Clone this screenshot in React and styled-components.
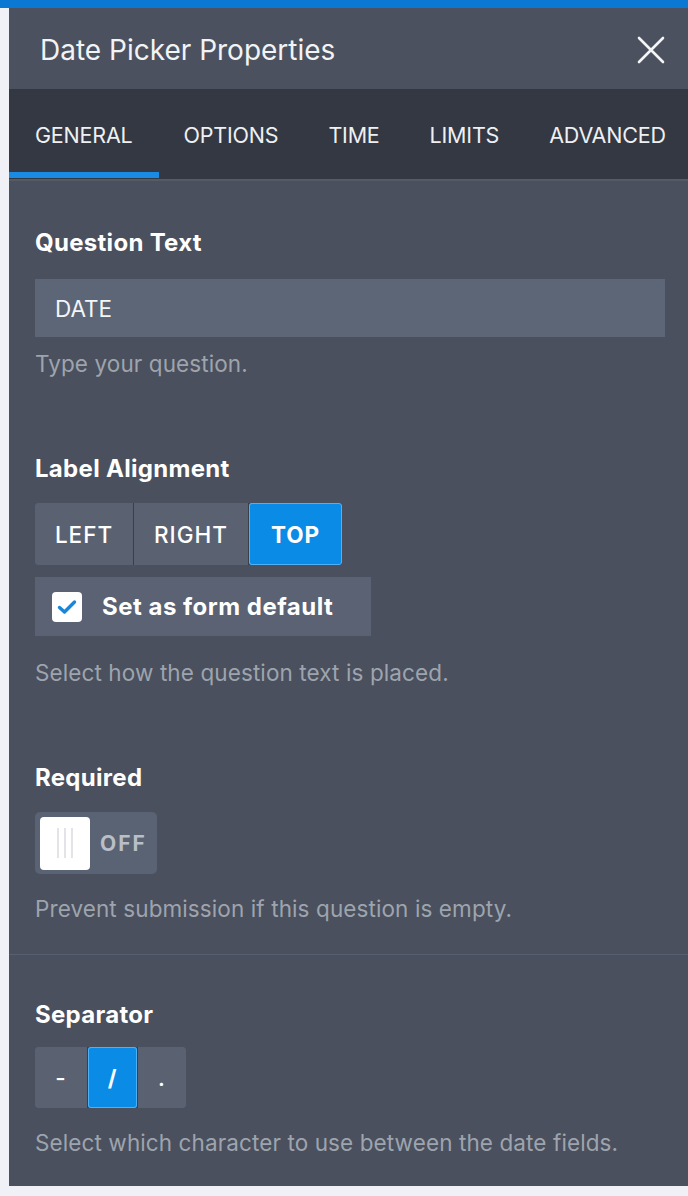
import React from 'react'
import styled, { createGlobalStyle } from 'styled-components'

const GlobalStyle = createGlobalStyle`
  html, body {
    margin: 0;
    padding: 0;
    background: #f2f3f7;
    font-family: Inter, "Liberation Sans", Arial, sans-serif;
  }
`

const Page = styled.div`
  border-top: 8px solid #0b78d3;
  display: flex;
  padding-left: 9px;
  padding-bottom: 10px;
  background: #eff1f6;
`

const Panel = styled.div`
  flex: 1;
  min-width: 0;
  background: #4a505d;
  color: #fff;
`

const Header = styled.div`
  height: 81px;
  display: flex;
  align-items: center;
  justify-content: space-between;
  padding: 2px 22px 0 31px;
  box-sizing: border-box;
  background: #4b515e;
`

const Title = styled.h1`
  margin: 0;
  font-size: 28px;
  font-weight: 400;
  color: #f2f3f5;
`

const CloseButton = styled.button`
  border: 0;
  background: transparent;
  padding: 0;
  width: 30px;
  height: 30px;
  display: flex;
  align-items: center;
  justify-content: center;
`

const TabBar = styled.div`
  display: flex;
  height: 90px;
  background: #343842;
  border-bottom: 2px solid #545a66;
  overflow: hidden;
`

const Tab = styled.div`
  position: relative;
  display: flex;
  align-items: center;
  padding: 2px 25px 0;
  font-size: 21.5px;
  letter-spacing: -0.2px;
  color: #eef0f3;
  white-space: nowrap;
  &:first-child {
    padding-left: 26px;
    padding-right: 26px;
  }
  ${p => p.$active && `
    &::after {
      content: '';
      position: absolute;
      left: 0;
      right: 0;
      bottom: 1px;
      height: 6px;
      background: #1a8be3;
    }
  `}
`

const Section = styled.section`
  padding: ${p => p.$top || 46}px 23px ${p => (p.$last ? 30 : 32)}px 26px;
  border-top: ${p => (p.$divider ? '1px solid #576070' : '0')};
`

const Label = styled.div`
  font-size: 24px;
  line-height: 28px;
  font-weight: 700;
  letter-spacing: 0.3px;
  color: #fff;
  margin-bottom: ${p => p.$gap || 20}px;
`

const TextInput = styled.div`
  height: 58px;
  display: flex;
  align-items: center;
  padding: 0 20px;
  background: #5c6677;
  font-size: 22.5px;
  color: #f4f5f7;
  box-sizing: border-box;
`

const Help = styled.div`
  margin-top: ${p => p.$gap || 22}px;
  font-size: 22.5px;
  line-height: 26px;
  letter-spacing: 0.1px;
  color: #9ea4ae;
`

const Group = styled.div`
  display: inline-flex;
  height: ${p => p.$h || 62}px;
  border-radius: 3px;
  overflow: hidden;
  background: #3a3f49;
  gap: 1px;
`

const GroupButton = styled.div`
  display: flex;
  align-items: center;
  justify-content: center;
  width: ${p => p.$w}px;
  box-sizing: border-box;
  font-size: 22.5px;
  letter-spacing: 1px;
  font-weight: ${p => (p.$active ? 700 : 500)};
  color: #fff;
  background: ${p => (p.$active ? '#0a8be6' : '#5a6272')};
  box-shadow: ${p => (p.$active ? 'inset 0 0 0 1px #4fb0f5' : 'none')};
  border-radius: ${p => (p.$active ? '3px' : '0')};
`

const CheckRow = styled.div`
  margin-top: 12px;
  width: 336px;
  height: 59px;
  display: flex;
  align-items: center;
  gap: 20px;
  padding-left: 17px;
  box-sizing: border-box;
  background: #5a6273;
  font-size: 24px;
  font-weight: 700;
  letter-spacing: 0.5px;
`

const Box = styled.div`
  width: 30px;
  height: 30px;
  border-radius: 4px;
  background: #fff;
  display: flex;
  align-items: center;
  justify-content: center;
`

const Toggle = styled.div`
  width: 122px;
  height: 62px;
  border-radius: 5px;
  background: #5a6374;
  display: flex;
  align-items: center;
  padding-left: 5px;
  box-sizing: border-box;
  gap: 10px;
`

const Knob = styled.div`
  width: 50px;
  height: 53px;
  border-radius: 4px;
  background: #fff;
  display: flex;
  align-items: center;
  justify-content: center;
  gap: 5px;
`

const Grip = styled.span`
  width: 2px;
  height: 30px;
  background: #e2e4e8;
`

const ToggleText = styled.span`
  font-size: 21px;
  font-weight: 700;
  letter-spacing: 2px;
  color: #b9bec7;
`

const Close = () => (
  <svg width="28" height="28" viewBox="0 0 28 28">
    <path d="M2 2 L26 26 M26 2 L2 26" stroke="#f4f5f7" strokeWidth="2.6" strokeLinecap="round" />
  </svg>
)

const Check = () => (
  <svg width="20" height="16" viewBox="0 0 20 16">
    <path d="M2.5 8.5 L7.5 13 L17.5 3" fill="none" stroke="#1a86d8" strokeWidth="3.4" strokeLinecap="round" strokeLinejoin="round" />
  </svg>
)

const tabs = ['GENERAL', 'OPTIONS', 'TIME', 'LIMITS', 'ADVANCED']

export default function App() {
  return (
    <>
      <GlobalStyle />
      <Page>
        <Panel>
          <Header>
            <Title>Date Picker Properties</Title>
            <CloseButton aria-label="Close"><Close /></CloseButton>
          </Header>
          <TabBar>
            {tabs.map((t, i) => (
              <Tab key={t} $active={i === 0}>{t}</Tab>
            ))}
          </TabBar>

          <Section $top={48}>
            <Label $gap={22}>Question Text</Label>
            <TextInput>DATE</TextInput>
            <Help $gap={14}>Type your question.</Help>
          </Section>

          <Section>
            <Label>Label Alignment</Label>
            <Group>
              <GroupButton $w={98}>LEFT</GroupButton>
              <GroupButton $w={114}>RIGHT</GroupButton>
              <GroupButton $w={93} $active>TOP</GroupButton>
            </Group>
            <CheckRow>
              <Box><Check /></Box>
              Set as form default
            </CheckRow>
            <Help $gap={24}>Select how the question text is placed.</Help>
          </Section>

          <Section>
            <Label>Required</Label>
            <Toggle>
              <Knob><Grip /><Grip /><Grip /></Knob>
              <ToggleText>OFF</ToggleText>
            </Toggle>
            <Help>Prevent submission if this question is empty.</Help>
          </Section>

          <Section $divider $last>
            <Label $gap={18}>Separator</Label>
            <Group $h={61}>
              <GroupButton $w={52}>-</GroupButton>
              <GroupButton $w={49} $active>/</GroupButton>
              <GroupButton $w={48}>.</GroupButton>
            </Group>
            <Help>Select which character to use between the date fields.</Help>
          </Section>
        </Panel>
      </Page>
    </>
  )
}
